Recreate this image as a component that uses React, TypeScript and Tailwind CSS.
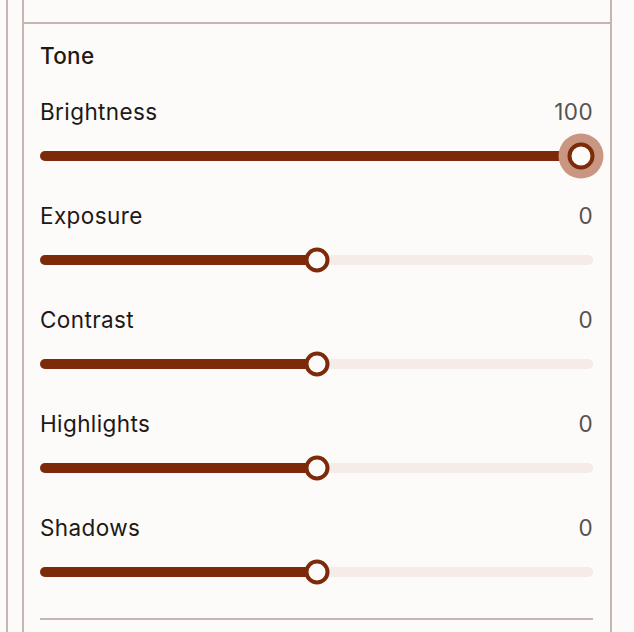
import React from "react";

const rows = [
  { label: "Brightness", value: "100", pct: 100, active: true },
  { label: "Exposure", value: "0", pct: 50, active: false },
  { label: "Contrast", value: "0", pct: 50, active: false },
  { label: "Highlights", value: "0", pct: 50, active: false },
  { label: "Shadows", value: "0", pct: 50, active: false },
];

function Slider({ pct, active }: { pct: number; active: boolean }) {
  const thumb = 24;
  const center = `calc(${pct}% + ${thumb / 2 - (pct * thumb) / 100}px)`;
  return (
    <div className="relative flex h-[26px] w-full items-center">
      <div className="relative h-[10px] w-full overflow-hidden rounded-full bg-[#f5ebe8]">
        <div className="absolute inset-y-0 left-0 bg-[#7c2a0a]" style={{ width: center }} />
      </div>
      <div
        className={
          active
            ? "absolute top-1/2 h-[27px] w-[27px] -translate-x-1/2 -translate-y-1/2 rounded-full border-[4px] border-[#7c2a0a] bg-[#fdfbfa] shadow-[0_0_0_9px_#c99681]"
            : "absolute top-1/2 h-[25px] w-[25px] -translate-x-1/2 -translate-y-1/2 rounded-full border-[4px] border-[#7c2a0a] bg-[#fdfbfa]"
        }
        style={{ left: center }}
      />
    </div>
  );
}

export default function App() {
  return (
    <div
      className="flex h-[632px] w-[634px] overflow-hidden bg-[#fdfbfa] text-[#1c1917]"
      style={{ fontFamily: "Inter, 'Noto Sans', sans-serif" }}
    >
      <div className="w-[6px] shrink-0" />
      <div className="flex border-l-2 border-[#c3b6b0] pl-[14px]">
        <div className="flex w-[590px] flex-col border-x-2 border-[#c3b6b0]">
          <div className="h-[24px] shrink-0 border-b-2 border-[#c3b6b0]" />
          <div className="flex flex-col pl-[16px] pr-[17px] pt-[18px]">
            <div className="text-[22.5px] font-medium leading-[28px] tracking-[0.3px]">Tone</div>
            <div className="mt-[28px] flex flex-col gap-[33px]">
              {rows.map((r) => (
                <div key={r.label} className="flex flex-col gap-[17px]">
                  <div className="flex h-[28px] items-center justify-between text-[22.5px] leading-[28px] tracking-[0.4px]">
                    <span>{r.label}</span>
                    <span className="text-[#57534e]">{r.value}</span>
                  </div>
                  <Slider pct={r.pct} active={r.active} />
                </div>
              ))}
            </div>
            <div className="mt-[33px] border-t-2 border-[#c3b6b0]" />
          </div>
        </div>
      </div>
    </div>
  );
}
